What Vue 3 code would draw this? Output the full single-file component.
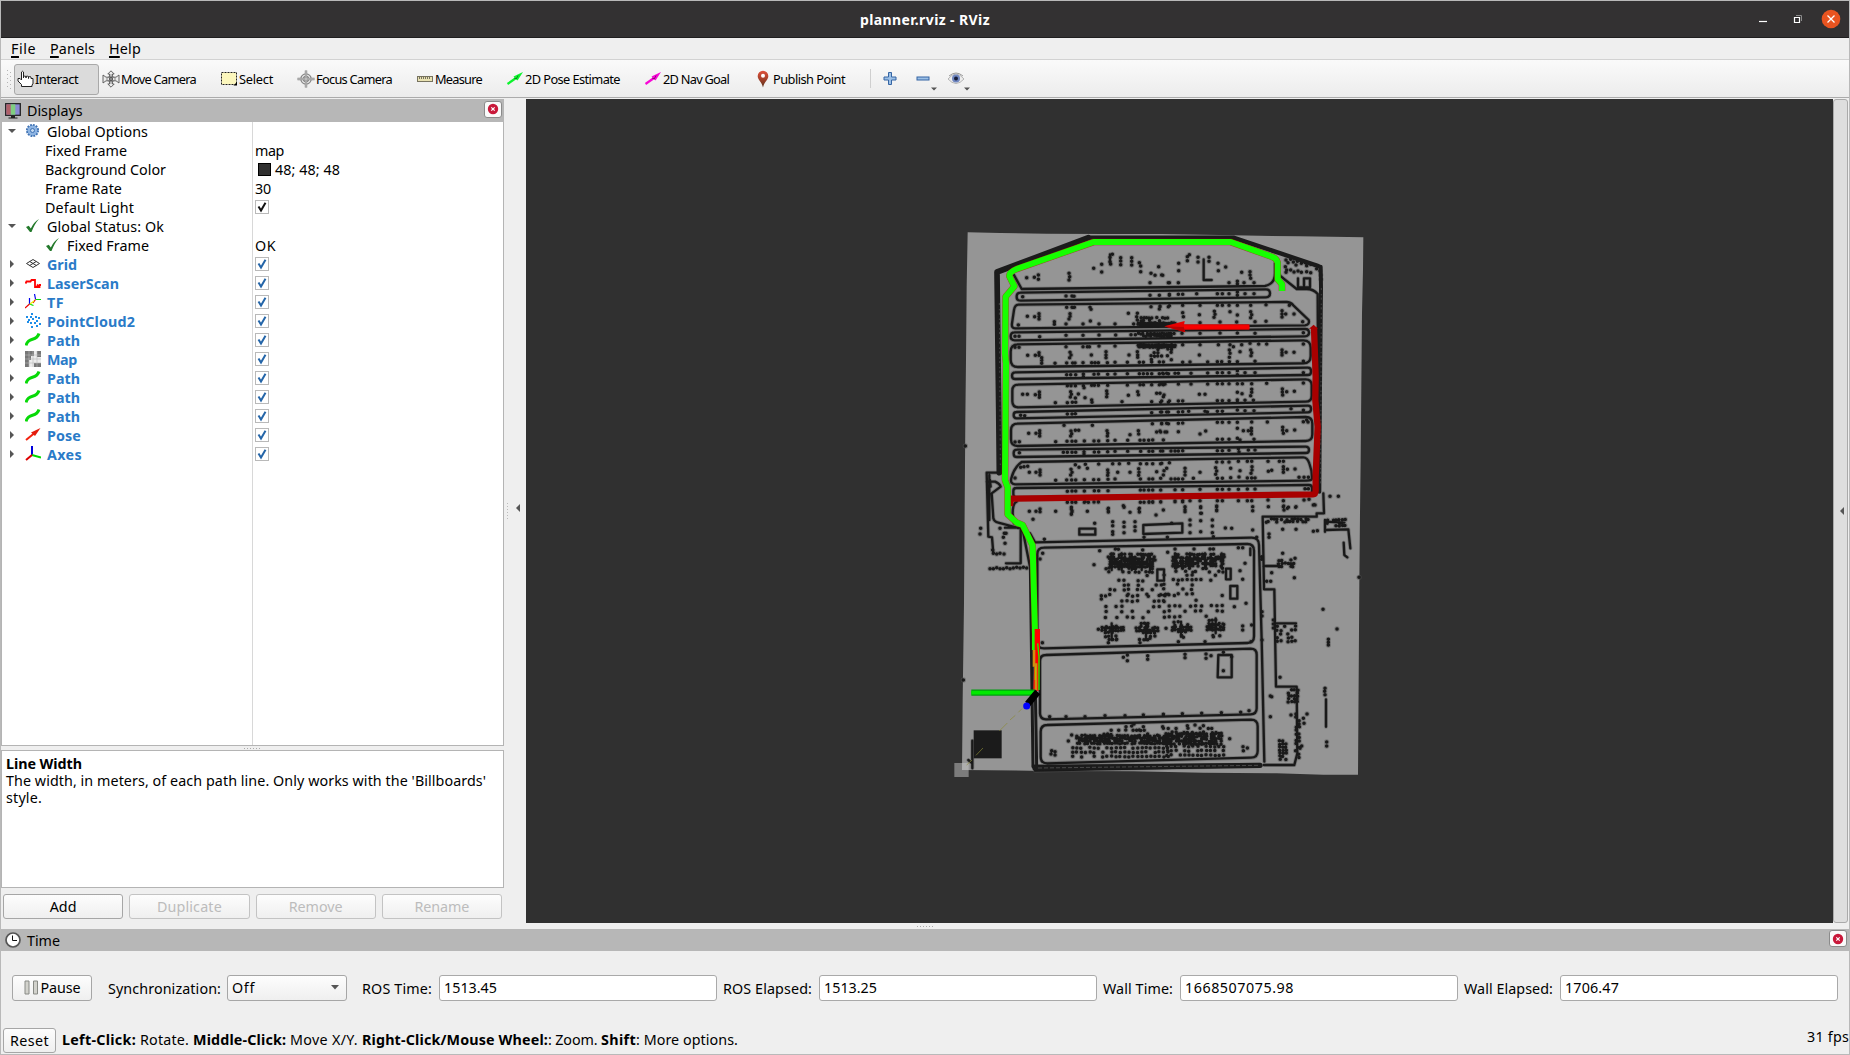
<script setup>
const vFit = {
  mounted(el, { value }) {
    const natural = el.getBoundingClientRect().width
    const count = el.textContent.length
    el.style.letterSpacing = `${(value - natural) / count}px`
  },
}

const menus = [
  { first: 'F', rest: 'ile', w: 25, gap: 14 },
  { first: 'P', rest: 'anels', w: 45, gap: 14 },
  { first: 'H', rest: 'elp', w: 32, gap: 0 },
]

const tools = [
  { icon: 'hand', text: 'Interact', w: 43, box: 85, active: true },
  { icon: 'move', text: 'Move Camera', w: 75, box: 118 },
  { icon: 'select', text: 'Select', w: 34, box: 77 },
  { icon: 'focus', text: 'Focus Camera', w: 76, box: 119 },
  { icon: 'measure', text: 'Measure', w: 47, box: 90 },
  { icon: 'pose', text: '2D Pose Estimate', w: 95, box: 138 },
  { icon: 'goal', text: '2D Nav Goal', w: 66, box: 110 },
  { icon: 'pin', text: 'Publish Point', w: 72, box: 110 },
]

const rows = [
  { open: true, icon: 'gear', text: 'Global Options', w: 101 },
  { leaf: true, text: 'Fixed Frame', w: 82, value: 'map', vw: 29 },
  { leaf: true, text: 'Background Color', w: 121, value: '48; 48; 48', vw: 65, swatch: true },
  { leaf: true, text: 'Frame Rate', w: 77, value: '30', vw: 16 },
  { leaf: true, text: 'Default Light', w: 89, check: 'dark' },
  { open: true, icon: 'ok', text: 'Global Status: Ok', w: 117 },
  { child: true, icon: 'ok', text: 'Fixed Frame', w: 82, value: 'OK', vw: 21 },
  { icon: 'grid', text: 'Grid', w: 30, display: true, check: 'blue' },
  { icon: 'laser', text: 'LaserScan', w: 72, display: true, check: 'blue' },
  { icon: 'tf', text: 'TF', w: 17, display: true, check: 'blue' },
  { icon: 'cloud', text: 'PointCloud2', w: 88, display: true, check: 'blue' },
  { icon: 'path', text: 'Path', w: 33, display: true, check: 'blue' },
  { icon: 'map', text: 'Map', w: 30, display: true, check: 'blue' },
  { icon: 'path', text: 'Path', w: 33, display: true, check: 'blue' },
  { icon: 'path', text: 'Path', w: 33, display: true, check: 'blue' },
  { icon: 'path', text: 'Path', w: 33, display: true, check: 'blue' },
  { icon: 'posearrow', text: 'Pose', w: 34, display: true, check: 'blue' },
  { icon: 'axes', text: 'Axes', w: 35, display: true, check: 'blue' },
]

const actions = [
  { text: 'Add', w: 27, on: true },
  { text: 'Duplicate', w: 65 },
  { text: 'Remove', w: 54 },
  { text: 'Rename', w: 55 },
]

const clocks = [
  { label: 'ROS Time:', w: 70, value: '1513.45', vw: 53 },
  { label: 'ROS Elapsed:', w: 89, value: '1513.25', vw: 53 },
  { label: 'Wall Time:', w: 70, value: '1668507075.98', vw: 109 },
  { label: 'Wall Elapsed:', w: 89, value: '1706.47', vw: 54 },
]

// Obstacle points of the occupancy map, one list per map quadrant.
const quadrants = [
  {
    dx: 0, dy: 0,
    pts: `230,173 253,172 265,165 265,178 357,160 359,170 357,180 431,145 455,133 455,156 480,112 487,103 480,125 482,132 512,113 512,123 512,134 545,113 545,124 545,135 568,128 572,138 572,155 603,160 615,166 626,140 638,166 600,188 655,188
218,230 348,228 366,228 372,229 600,226 628,226 658,226
205,315 232,289 254,290 267,281 267,289 267,297 313,305 313,313 350,262 366,262 373,262 360,281 360,289 357,297 348,312 399,312 420,262 423,268 421,303 447,312 495,312 535,280 562,280 560,290 562,300 551,312 603,260 630,260 628,267 655,260
195,349 207,349 269,350 348,346 399,346 447,345 497,345 543,344 556,344
195,382 207,382 233,406 256,406 267,398 267,406 275,413 275,421 275,430 348,380 399,380 412,380 418,380 447,378 495,378 360,397 363,405 359,413 424,405 468,395 468,405 468,413 537,405 562,395 563,405 563,412 315,430 350,429 368,429 375,429 399,428 425,428 435,428 445,428 472,428 495,427 532,427 568,427 580,427 605,426 628,426 640,426
350,464 362,464 377,464 400,462 400,470 432,463 445,462 473,463 495,462 532,461 568,461 580,461 592,461 605,461 628,461 640,461 655,461
218,523 232,523 256,524 268,516 268,524 268,532 352,497 363,497 376,497 400,497 402,503 425,496 433,496 445,496 473,496 532,495 570,494 580,494 605,494 628,494 640,494 362,515 364,523 361,531 376,534 385,522 405,533 470,513 471,521 470,530 535,526 563,515 565,524 316,548 352,548 367,547 377,547 425,540 426,547 516,545 605,545 620,520 640,530 632,547 655,547
212,586 224,587 352,582 366,582 376,581 605,578 632,576 655,576
236,640 258,640 269,632 269,640 269,648 195,666 208,665 342,616 427,616 607,611 635,611 655,611 363,633 365,641 362,648 376,631 386,631 471,632 473,640 472,648 540,644 565,632 566,642 317,665 351,664 366,664 377,664 403,663 432,663 446,663 473,662 495,661 533,661 570,661 582,661 596,661 608,660 620,636 632,636 645,636
208,698 340,697 352,697 366,697 377,697 402,695 402,702 433,696 446,696 473,695 495,694 533,694 572,694 597,694 608,694 632,693
195,774 212,742 222,740 233,739 238,757 258,757 270,750 270,757 270,765 376,734 406,733 446,732 488,731 508,731 536,730 571,731 590,731 608,731 632,731 363,748 366,757 362,765 387,742 412,745 473,750 474,758 473,766 503,757 540,757 566,746 567,757 566,766 317,781 350,780 365,780 377,780 403,779 431,779 446,779 474,778 495,777 571,777 597,777 608,777 632,775 620,755 640,765
352,814 366,813 377,813 403,813 433,812 446,812 474,812 571,810 582,810 596,810 608,810 632,810
238,874 258,874 270,867 270,875 317,874 352,847 366,847 377,847 403,847 415,847 432,846 445,846 364,867 366,875 364,883 412,874 474,867 475,876 520,857 522,862 540,877 567,867 568,876 571,847 582,847 597,847 608,847 632,846 46,678`,
  },
  {
    dx: 630, dy: 0,
    pts: `56,130 56,152 82,110 88,104 82,122 114,112 114,126 147,112 147,124 174,130 175,152 197,141 5,165 55,188 28,188 245,157 270,155 270,165 272,175 232,184 232,192 207,188 252,188 282,188
28,223 55,223 68,223 110,221 172,221 187,221 207,221 232,216 232,226 255,221 282,221
0,258 28,257 68,256 120,256 172,256 187,256 207,256 232,256 272,256 318,254 388,256 68,278 70,290 118,284 163,274 165,283 162,292 210,275 232,285 272,275 275,284 272,293 366,272 366,282 366,291 377,282 402,282 428,305 318,304 285,305 230,306 180,306 120,308
66,340 120,340 180,339 232,339 285,340 430,338
68,374 120,374 175,374 210,374 220,380 245,374 270,370 296,372 320,372 430,372 118,405 208,390 210,400 208,412 240,395 272,390 275,398 273,407 366,390 366,398 366,405 378,397 402,397 430,424 68,427 90,426 143,426 172,425 185,425 208,425 232,425 285,424
8,460 20,460 45,460 55,460 93,460 143,459 172,458 187,458 207,458 232,452 232,464 255,458 285,458 430,458
5,492 15,492 55,492 93,492 143,492 172,491 187,491 207,491 232,491 247,491 275,491 320,490 430,489 0,520 12,525 118,523 135,523 232,517 246,521 275,508 275,517 272,527 367,507 367,516 368,525 380,515 403,514 5,543 28,543 55,543 68,543 172,542 187,542 207,542 232,540 232,547 255,541 280,541
5,576 20,576 55,576 68,575 86,574 135,574 142,576 172,574 187,574 232,570 255,572 282,572 393,566 430,571
5,610 20,610 55,610 68,609 172,607 187,607 207,607 232,607 275,606 322,606 430,605 440,600 444,606 0,633 20,636 55,635 120,642 137,633 232,625 250,632 265,632 274,625 274,633 274,642 368,622 368,631 370,640 380,632 404,630 10,660 172,658 187,658 207,658 232,655 240,660 282,658
8,693 33,693 45,693 55,693 68,692 172,692 187,692 207,691 235,686 237,696 265,690 285,690
5,730 28,728 170,726 187,726 207,726 235,724 262,724 275,724 324,724 358,724 370,724 12,752 20,745 75,745 75,755 75,765 120,757 167,743 170,753 167,763 212,745 240,752 276,740 276,750 273,760 325,754 335,751 370,740 370,748 370,757 382,748 405,747 417,772 432,772 445,772 33,777 45,777 55,777 68,777 100,775 172,775 187,775 212,773 237,771 262,774 275,774 285,774
45,809 68,809 120,808 172,808 187,808 207,808 235,808 262,807 285,807 435,806 445,806
45,843 68,842 90,842 120,842 172,842 187,842 235,842 262,842 275,842 324,840 370,842 432,840 447,838 75,862 75,870 122,863 124,880 170,858 170,870 278,860 278,872 370,860 372,870 385,862 407,862 460,855 465,855 510,829 535,829
378,120 384,128 392,118 400,126 412,124 408,135 424,130 436,128 440,137 452,133 466,136 470,146 480,152 376,140 380,150 378,157 392,150 402,156 414,153 424,157 440,155 452,158 482,165 483,178`,
  },
  {
    dx: 0, dy: 840,
    pts: `238,34 258,34 270,27 270,35 249,58 317,34 283,118 364,22 366,32 364,41 405,5 445,5 475,25 475,34 488,65 488,77 488,95 488,103 522,20 522,67 522,80 522,98 555,65 555,80 555,92 568,25 568,35 434,70 597,5 608,5 618,45 632,5 640,30 582,112
92,85 90,102 150,85 163,100 160,112 168,100 128,150 130,160 150,160 162,162 165,130 120,206 130,206 140,203 150,206 160,206 170,203 180,206 190,204 200,202 210,204 220,202 230,204 140,162
270,177 278,160 277,428 432,194 496,147 449,152 505,148 578,150 615,180 475,428 500,418 570,428 600,415 454,287 454,297 445,388
520,472 532,465 532,482 593,467 593,478 299,650 348,650 405,650 465,647 525,647 580,645 640,645
305,752 315,765 315,755 303,762 355,723 365,705 528,680 545,678 580,680 552,672 568,690 40,540`,
  },
  {
    dx: 630, dy: 840,
    pts: `45,5 68,5 75,20 75,35 90,60 90,75 90,98 122,20 122,40 122,62 122,95 157,60 157,78 157,98 170,20 170,32 160,110 196,84 215,85 278,20 278,32 278,90 290,112 325,20 371,18 372,30 382,25 408,20 463,14 22,112 35,70
235,143 248,143 255,190 240,212 248,238 258,310 223,320 248,378 248,390 275,375 273,425 45,147 102,147 150,147 160,147 23,157 18,385 55,425 135,425 70,412 160,410 306,335 306,348 306,420
75,463 75,473 138,462 138,475 153,467 190,457 190,512 10,643 67,641 125,640 184,638 242,637 267,632 215,470
8,680 82,677 105,675 130,677 209,716 249,740 250,752 262,744
327,102 327,112 368,88 408,88 460,94 472,92 403,233 489,328 531,387 505,418 505,427 505,435 597,232 495,565 494,574 495,584 500,726 500,738 331,588 331,650 393,645 441,642 430,655 432,670 425,738 335,218 320,244 332,244 368,160 405,175 398,200 360,532 335,590 305,170 305,178 340,360 340,372 340,384 420,745`,
  },
]

// Storage areas: x, y, width, height, step, fill ratio.
const areas = [
  [572, 292, 95, 12, 8, 0.6], [564, 308, 110, 6, 5, 1], [564, 339, 110, 12, 7, 0.85], [564, 374, 110, 8, 5, 1], [602, 386, 60, 32, 10, 0.5],
  [474, 1002, 138, 14, 8, 0.65], [478, 1016, 134, 28, 7.5, 0.86], [466, 1044, 146, 10, 10, 0.6],
  [478, 1066, 180, 60, 14, 0.45], [450, 1126, 205, 74, 16, 0.4],
  [455, 1222, 64, 14, 8, 0.9], [468, 1208, 40, 12, 10, 0.6], [464, 1236, 40, 24, 11, 0.6],
  [558, 1222, 64, 14, 8, 0.9], [572, 1208, 36, 12, 10, 0.6], [568, 1236, 46, 24, 11, 0.6],
  [668, 1002, 152, 12, 8, 0.65], [668, 1014, 152, 28, 7.5, 0.86], [676, 1044, 140, 10, 10, 0.5],
  [640, 1064, 180, 60, 14, 0.4], [640, 1124, 190, 70, 16, 0.4],
  [666, 1220, 60, 14, 8, 0.9], [672, 1204, 40, 14, 10, 0.6], [672, 1234, 40, 20, 11, 0.6],
  [770, 1212, 56, 20, 8, 0.85], [776, 1200, 40, 12, 10, 0.6], [776, 1234, 40, 20, 11, 0.6],
  [380, 1546, 270, 28, 7.5, 0.85], [460, 1530, 160, 16, 11, 0.5], [366, 1582, 290, 30, 13, 0.85],
  [640, 1540, 175, 30, 7.5, 0.83], [640, 1524, 160, 14, 12, 0.5], [650, 1578, 180, 30, 13, 0.8],
  [946, 896, 130, 14, 8, 0.8], [985, 1020, 50, 20, 9, 0.6], [980, 1218, 56, 52, 11, 0.62],
  [1014, 1408, 34, 40, 9, 0.7], [988, 1562, 24, 58, 9, 0.85], [1036, 1480, 10, 130, 10, 0.6], [1130, 898, 54, 22, 9, 0.6],
]

function scatter() {
  let seed = 11
  const next = () => {
    seed = (seed * 16807) % 2147483647
    return seed / 2147483647
  }
  let d = ''
  for (const [x, y, w, h, step, ratio] of areas) {
    for (let j = 0; j <= h; j += step) {
      for (let i = 0; i <= w; i += step) {
        if (next() < ratio) d += `M${(x + i + next() * 3).toFixed(1)} ${(y + j + next() * 3).toFixed(1)}h.1`
      }
    }
  }
  return d
}

const dots =
  quadrants
    .map(q => q.pts.trim().split(/\s+/).map(p => {
      const [x, y] = p.split(',').map(Number)
      return `M${x + q.dx} ${y + q.dy}h.1`
    }).join(''))
    .join('') + scatter()

// Shelf rows: left x, left top, left bottom, right x, right top, right bottom, corner.
const shelves = [
  [200, 218, 242, 960, 208, 232, 12], [182, 337, 361, 1077, 327, 349, 12], [182, 373, 441, 1082, 361, 430, 22],
  [186, 457, 477, 1083, 443, 465, 10], [187, 494, 562, 1085, 478, 545, 18], [191, 576, 595, 1083, 557, 577, 9],
  [183, 611, 678, 1087, 591, 663, 20], [191, 689, 711, 1077, 680, 699, 10], [190, 804, 832, 1086, 795, 824, 9],
  [262, 983, 1285, 912, 972, 1269, 20], [270, 1305, 1498, 920, 1286, 1483, 18], [272, 1515, 1630, 923, 1499, 1613, 20],
]
const shelfPath = shelves.map(([lx, lt, lb, rx, rt, rb, r]) =>
  `M${lx + r} ${lt}L${rx - r} ${rt}Q${rx} ${rt} ${rx} ${rt + r}L${rx} ${rb - r}Q${rx} ${rb} ${rx - r} ${rb}L${lx + r} ${lb}Q${lx} ${lb} ${lx} ${lb - r}L${lx} ${lt + r}Q${lx} ${lt} ${lx + r} ${lt}`).join('')

const walls = shelfPath + [
  'M192 165L215 207L945 198Q975 192 975 160V130',
  'M205 254L1010 246Q1022 246 1030 256L1076 300Q1080 314 1065 316L195 325Q184 325 186 310L192 270Q195 254 205 254',
  'M215 726L1060 712Q1072 712 1078 730Q1086 750 1086 775Q1086 782 1070 782L195 793Q180 792 184 775Q192 742 215 726',
  'M200 845Q188 850 188 880L192 910M240 940L255 967L905 953Q927 953 927 975L935 1260L943 1625',
  'M980 150Q985 165 1000 175L1040 207H1070Q1090 207 1103 222L1106 790Q1105 815 1090 822',
  'M110 758H150M110 758L115 950L126 952L130 1000M110 785H135Q150 792 152 800L125 820L130 895Q132 905 145 908L205 924M120 780L122 800M118 765L118 900',
  'M165 923H212V1030H168M218 930L240 1040',
  'M67 1562V1645M55 1620L67 1630',
  'M250 1638L930 1634M255 1652L930 1638',
  'M1120 820L1122 880L1100 880V890H938L942 1108H973L978 1400H1040L1042 1600L1033 1635H942',
  'M940 1038H990M978 1210H1038M1125 900V935M1125 905L1183 908M1125 930L1195 928L1201 985M1181 968L1183 1005L1192 1012M1128 1438V1520M901 985V1005',
  'M761 118L761 180H785M480 103V132M388 926H436V944H388ZM580 915L697 910V938L580 942ZM622 1048H642V1082H622ZM828 1046H842V1078H828ZM841 1098H862V1136H841ZM805 1305H845V1372H803Z',
  'M1044 175V200M1044 202H1062M1062 175H1080V202H1062ZM485 1000V1050M515 1000V1050M545 1002V1050M575 1002V1050M600 1002V1050M675 1000V1045M720 1000V1045M765 1000V1045M815 1000V1045M485 1210V1260M588 1210V1260M693 1205V1250M797 1195V1240',
].join('')
</script>

<template>
  <div class="window">
    <header class="title">
      <div class="title-side"></div>
      <b v-fit="130">planner.rviz - RViz</b>
      <div class="title-side controls">
        <svg width="100" height="36" viewBox="0 0 100 36">
          <path d="M9 20.500h8" stroke="#fff" stroke-width="1.200" />
          <path d="M44.500 16.500h5v5h-5z" fill="none" stroke="#fff" stroke-width="1.200" />
          <path d="M46 14.500h5.500v5.500" fill="none" stroke="#8a8a8a" />
          <circle cx="81" cy="18" r="9.300" fill="#e95420" />
          <path d="M77.500 14.500l7 7m0-7l-7 7" stroke="#fff" stroke-width="1.300" />
        </svg>
      </div>
    </header>

    <nav class="menu">
      <span v-for="m in menus" :key="m.first" v-fit="m.w" :style="{ marginRight: m.gap + 'px' }"><u>{{ m.first }}</u>{{ m.rest }}</span>
    </nav>

    <div class="toolbar">
      <svg class="grip" width="6" height="20"><path d="M1.500 1v18M4.500 3v18" stroke="#b5b5b5" stroke-dasharray="1 3" /></svg>
      <div v-for="t in tools" :key="t.text" class="tool" :class="{ active: t.active }" :style="{ width: t.box + 'px' }">
        <svg width="18" height="18" viewBox="0 0 18 18">
          <path v-if="t.icon === 'hand'" d="M4.500 16.500V14.500L1 11V8.500h2l1.500 1.500V2q1-1.500 2 0V8V6.500q1.200-.8 2.500 0V8V6.500q1.200-.8 2.500 0V8.500V7q1.500-.8 2.500 0V8.500h2V14l-1 .8v1.700z" fill="#fff" stroke="#222" />
          <g v-else-if="t.icon === 'move'" fill="#ececec" stroke="#555" stroke-width=".9">
            <path d="M9 .8l3.200 3.200H10.500V7h-3V4H5.800zM9 17.200l3.200-3.200H10.500V11h-3v3H5.800z" />
            <path d="M1 5l3 2.200h10L17 5v8l-3-2.200H4L1 13z" />
            <path d="M9 4.500l4.500 4.500L9 13.500 4.500 9z" fill="none" stroke="#777" />
            <circle cx="9" cy="9" r="1.700" fill="#888" />
          </g>
          <g v-else-if="t.icon === 'select'"><rect x="1.500" y="2.500" width="15" height="12" fill="#fcf7bd" stroke="#222" stroke-dasharray="2 1" /><path d="M17 12v3.500h-3.500z" fill="#000" /></g>
          <g v-else-if="t.icon === 'focus'" fill="none" stroke="#858585" stroke-width="1.200">
            <circle cx="9" cy="9" r="5.200" /><circle cx="9" cy="9" r="2.600" /><path d="M9 .5v17M.5 9h17" stroke-width="2.400" /><path d="M9 1v16M1 9h16" stroke="#ddd" stroke-width=".8" />
          </g>
          <g v-else-if="t.icon === 'measure'"><rect x="1.500" y="6.500" width="15" height="5" fill="#e9e2b2" stroke="#77735f" /><path d="M3.500 7v2m2-2v2m2-2v2m2-2v2m2-2v2m2-2v2" stroke="#77735f" /></g>
          <g v-else-if="t.icon === 'pose' || t.icon === 'goal'" :class="t.icon">
            <path d="M1.500 14L10 8" stroke="currentColor" stroke-width="2.200" /><path d="M17 2L7.500 6.500l4 4z" fill="currentColor" /><path d="M8 8l3 1M12 5.500l-1.500 3" stroke="#0006" />
          </g>
          <g v-else><path d="M9 17.500C8 12 3.500 9.500 3.700 6a5.300 5.300 0 0 1 10.600 0C14.500 9.500 10 12 9 17.500z" fill="url(#pinfill)" /><circle cx="9" cy="5.700" r="2" fill="#fff" /></g>
          <defs><linearGradient id="pinfill" x2="0" y2="1"><stop stop-color="#e0523c" /><stop offset=".5" stop-color="#a5402a" /><stop offset="1" stop-color="#553018" /></linearGradient></defs>
        </svg>
        <span v-fit="t.w">{{ t.text }}</span>
      </div>
      <svg class="extras" width="104" height="32" viewBox="0 0 104 32">
        <path d="M.5 6v19" stroke="#cfcfcf" />
        <path d="M18.500 9.500h3v4.500h4.500v3h-4.500v4.500h-3v-4.500H14v-3h4.500z" fill="#9cc0e6" stroke="#3465a4" />
        <rect x="47" y="14" width="12" height="3" fill="#9cc0e6" stroke="#3465a4" />
        <path d="M61 24.500h6l-3 3zM94 24.500h6l-3 3z" fill="#555" />
        <path d="M78 16q8-10 16 0q-8 9-16 0z" fill="#ededed" stroke="#b5b5b5" />
        <circle cx="86" cy="15.500" r="4" fill="#6f86c0" /><circle cx="86" cy="15.500" r="2" fill="#151c38" /><path d="M79 13q7-6 14 0" fill="none" stroke="#999" />
      </svg>
    </div>

    <div class="middle">
      <aside class="left">
        <div class="dock">
          <svg width="18" height="18" viewBox="0 0 18 18"><rect x="1.700" y="1.700" width="14.600" height="11.600" fill="#8a8ad5" stroke="#222" stroke-width="1.300" /><path d="M2.300 2.300h4.500v10.400H2.300z" fill="#b06068" /><path d="M6.800 2.300h4.500v10.400H6.800z" fill="#80ce80" /><path d="M7 14h4v1.500h2.500v1h-9v-1H7z" fill="#222" /></svg>
          <span v-fit="55.500">Displays</span>
          <i class="close"><svg width="12" height="12" viewBox="0 0 12 12"><circle cx="6" cy="6" r="5.200" fill="#c9183a" /><path d="M4.300 4.300l3.400 3.400m0-3.400l-3.400 3.400" stroke="#fff" stroke-width="1.200" /></svg></i>
        </div>
        <div class="tree">
          <div v-for="(r, i) in rows" :key="i" class="row" :class="{ leaf: r.leaf, child: r.child, display: r.display }">
            <div class="name">
              <svg v-if="!r.leaf && !r.child" class="expander" width="10" height="10"><path :d="r.open ? 'M1 3h8L5 7z' : 'M3 1v8l4-4z'" fill="#555" /></svg>
              <svg v-if="r.icon" class="icon" width="16" height="16" viewBox="0 0 16 16">
                <g v-if="r.icon === 'gear'"><circle cx="7.500" cy="7.500" r="5.400" fill="#87b0df" stroke="#3f72b4" stroke-width="2.300" stroke-dasharray="1.800 1" /><circle cx="7.500" cy="7.500" r="4.800" fill="#8db4e2" /><circle cx="7.500" cy="7.500" r="2" fill="#c4d9f0" stroke="#3f72b4" /></g>
                <path v-else-if="r.icon === 'ok'" d="M1 9l2.800-1.200 2 2.700q3-6.500 8.200-9.500q-4.500 5-7.500 13H5z" fill="#23792b" />
                <g v-else-if="r.icon === 'grid'" fill="none" stroke="#333"><path d="M1.500 7.500L8 3.500l6.500 4L8 11.500zM4.800 5.500l6.500 4M11.200 5.500l-6.500 4" /></g>
                <path v-else-if="r.icon === 'laser'" d="M.5 8.500l1-2h4l1-1.500h3.500v7h2l.5-1.500L14 12h.5V10H16" fill="none" stroke="#f00" stroke-width="1.800" />
                <g v-else-if="r.icon === 'tf'" fill="none" stroke-width="1.200"><path d="M4.500 4v6M9.500 0l1 5" stroke="#00e" /><path d="M4.500 10l4 1.500M10.500 5.500H16" stroke="#0d0" /><path d="M4.500 10L0 14M10.500 5.500L8 9" stroke="#e00" /><path d="M5 10l4-3" stroke="#ee0" /></g>
                <path v-else-if="r.icon === 'cloud'" d="M6 1h2M1 4h2m2 0h2m3 0h2m1 1h2M3 7h2m2-1h2m2 2h2M5 10h2m-5-1h2m5 1h2m3 1h2M6 14h2m3-1h2" stroke="#1d8de8" stroke-width="2" />
                <path v-else-if="r.icon === 'path'" d="M1 13.500C3 4.500 11.500 10 14 1.500" fill="none" stroke="#08d908" stroke-width="3" />
                <g v-else-if="r.icon === 'map'"><path d="M0 0h16v16H0z" fill="#ededed" /><path d="M0 0h9v5H6v4H4v7H0zM12 0h4v6h-4zM9 12h7v4H9z" fill="#777" /><path d="M0 4h16M0 8h16M0 12h16M4 0v16M8 0v16M12 0v16" stroke="#bbb" stroke-width=".6" /></g>
                <g v-else-if="r.icon === 'posearrow'"><path d="M1 13L9 6.500" stroke="#f2220f" stroke-width="2" /><path d="M15.500 1L6 5.500l4 3.500z" fill="#e31b0c" /></g>
                <g v-else fill="none" stroke-width="2"><path d="M7 9V0" stroke="#00d" /><path d="M7 9l9 2.500" stroke="#0d0" /><path d="M7 9l-6 5" stroke="#d00" /></g>
              </svg>
              <span v-fit="r.w">{{ r.text }}</span>
            </div>
            <div class="value">
              <i v-if="r.swatch" class="swatch"></i>
              <span v-if="r.value" v-fit="r.vw">{{ r.value }}</span>
              <i v-if="r.check" class="check" :class="r.check"><svg width="12" height="12"><path d="M2.500 5.500L5 9.500L9.500 1.800" fill="none" stroke="currentColor" stroke-width="2" /></svg></i>
            </div>
          </div>
          <div class="row filler"><div class="name"></div></div>
        </div>
        <div class="split"><i></i></div>
        <div class="help">
          <b v-fit="76">Line Width</b>
          <span v-fit="480">The width, in meters, of each path line. Only works with the 'Billboards'</span>
          <span v-fit="36">style.</span>
        </div>
        <div class="actions">
          <button v-for="a in actions" :key="a.text" :disabled="!a.on"><span v-fit="a.w">{{ a.text }}</span></button>
        </div>
      </aside>
      <div class="handle"><svg width="18" height="18"><path d="M1.500 1v17" stroke="#bbb" stroke-dasharray="1 2" /><path d="M14 2v8l-4-4z" fill="#555" /></svg></div>

      <main class="view">
        <svg width="1307" height="824" viewBox="526 99 1307 824">
          <g transform="translate(950 220) scale(.333333)">
            <path d="M53 37L150 39L290 41L460 42L630 42L850 46L1050 49L1240 52L1239 150L1236 280L1234 500L1232 720L1230 880L1228 1090L1226 1380L1224 1664L1120 1664L980 1660L760 1658L550 1654L240 1652L36 1650L38 1440L42 1150L44 860L46 600L48 420L50 200Z" fill="#959595" />
            <g fill="none" stroke-linecap="round" stroke-linejoin="round">
              <g stroke="#555" opacity=".45"><path :d="walls" stroke-width="12" /><path :d="dots" stroke-width="16" /></g>
              <g stroke="#191919"><path :d="walls" stroke-width="7" /><path :d="dots" stroke-width="10.500" /></g>
              <path d="M148 758L146 560L141 156L415 53" stroke="#1b1b1b" stroke-width="17" />
              <path d="M415 53H850L1105 138" stroke="#1b1b1b" stroke-width="13" />
              <path d="M1112 140L1113 205L1110 500L1108 815" stroke="#1b1b1b" stroke-width="12" />
              <path d="M1114 205L1112 800M148 250L151 740" stroke="#6e6e6e" stroke-width="1.500" stroke-dasharray="4 14 2 9" />
              <path d="M241 1040L249 1640M254 1300L260 1640" stroke="#1b1b1b" stroke-width="9" />
              <path d="M255 1644L930 1636" stroke="#1b1b1b" stroke-width="16" /><path d="M265 1644L930 1636" stroke="#777" stroke-width="1.500" stroke-dasharray="10 8" />
            </g>
            <rect x="71" y="1531" width="84" height="84" fill="#1b1b1b" />
            <rect x="13" y="1629" width="43" height="42" fill="#c8c8c8" opacity=".5" />
            <path d="M50 1635L66 1620M78 1606L99 1584M148 1533L172 1509M180 1500L196 1486M205 1477L216 1466" stroke="#8a8a35" stroke-width="2" />
            <g fill="none" stroke-linejoin="round">
              <path d="M180 858L182 836L1088 823Q1097 822 1097 812L1097 770L1103 620L1096 540L1097 470L1092 322" stroke="#a80000" stroke-width="19" />
              <path d="M1077 326L1091 314L1104 326z" fill="#a80000" />
              <path d="M996 213V193L983 178V128Q980 115 965 110L842 66H431L200 147Q178 156 178 168L193 199L167 230L165 400L168 430L165 780L173 802V883L200 908L218 915L248 977L255 1240V1290" stroke="#b01000" stroke-width="20" opacity=".7" />
              <path d="M996 213V193L983 178V128Q980 115 965 110L842 66H431L200 147Q178 156 178 168L193 199L167 230L165 400L168 430L165 780L173 802V883L200 908L218 915L248 977L255 1240V1290" stroke="#16ff00" stroke-width="18" />
              <path d="M262 1227V1300L258 1412" stroke="#f00" stroke-width="16" />
              <path d="M263 1270L267 1310V1410" stroke="#20f000" stroke-width="4" />
              <path d="M252 1290V1340M258 1330V1410" stroke="#d09010" stroke-width="8" />
              <path d="M256 1340V1380" stroke="#b8bd00" stroke-width="4" />
            </g>
            <path d="M64 1418H256" stroke="#009d10" stroke-width="19" /><path d="M64 1418H258" stroke="#00e900" stroke-width="11" />
            <path d="M263 1416L233 1452" stroke="#000" stroke-width="20" /><circle cx="230" cy="1458" r="10.500" fill="#00f" />
            <path d="M700 321H898" stroke="#d80000" stroke-width="17" /><path d="M700 321H898" stroke="#f80000" stroke-width="10" />
            <path d="M643 319L704 303L701 321L706 337z" fill="#e60000" /><path d="M643 319L701 321L706 337z" fill="#b80000" />
          </g>
        </svg>
      </main>
      <div class="handle right"><svg width="6" height="8"><path d="M5 0v8L1 4z" fill="#555" /></svg></div>
    </div>

    <div class="split wide"><i></i></div>

    <div class="dock time">
      <svg width="18" height="18" viewBox="0 0 18 18"><circle cx="9" cy="9" r="7" fill="#fff" stroke="#555" stroke-width="1.700" /><path d="M8.500 4.500v5H13" fill="none" stroke="#111" /></svg>
      <span v-fit="33">Time</span>
      <i class="close"><svg width="12" height="12" viewBox="0 0 12 12"><circle cx="6" cy="6" r="5.200" fill="#c9183a" /><path d="M4.300 4.300l3.400 3.400m0-3.400l-3.400 3.400" stroke="#fff" stroke-width="1.200" /></svg></i>
    </div>

    <div class="clocks">
      <button class="pause"><svg width="15" height="15"><path d="M1 1h4v13H1zM9.500 1h4v13h-4z" fill="#d2d2cc" stroke="#888a85" /></svg><span v-fit="40">Pause</span></button>
      <label v-fit="113" class="sync">Synchronization:</label>
      <div class="combo"><span v-fit="23">Off</span><svg width="8" height="5"><path d="M0 0h8L4 4.500z" fill="#555" /></svg></div>
      <div v-for="c in clocks" :key="c.label" class="clock">
        <label v-fit="c.w">{{ c.label }}</label>
        <div class="field"><span v-fit="c.vw">{{ c.value }}</span></div>
      </div>
    </div>

    <footer class="status">
      <button class="reset"><span v-fit="39">Reset</span></button>
      <p><b v-fit="78">Left-Click: </b><span v-fit="53">Rotate. </span><b v-fit="97">Middle-Click: </b><span v-fit="72">Move X/Y. </span><b v-fit="186">Right-Click/Mouse Wheel:</b><span v-fit="53">: Zoom. </span><b v-fit="35">Shift</b><span v-fit="102">: More options.</span></p>
      <em v-fit="42">31 fps</em>
    </footer>
  </div>
</template>

<style>
body { background: #efefef; overflow: hidden; }
</style>

<style scoped>
* { box-sizing: border-box; }
.window { width: 1850px; height: 1055px; border: 1px solid #b9b9b9; background: #efefef; display: flex; flex-direction: column; font: 14.3px/17px "Noto Sans", "Open Sans", sans-serif; color: #000; }
span, b, label, em { display: inline-block; white-space: pre; }
.title { height: 37px; flex: none; background: #333132; border-bottom: 1px solid #1f1e1f; display: flex; align-items: center; color: #fff; font-size: 14px; }
.title-side { flex: 1; height: 36px; }
.title b { margin-top: 1px; }
.controls { display: flex; justify-content: flex-end; }
.controls svg { margin-right: -1px; }
.menu { height: 22px; flex: none; border-bottom: 1px solid #d2d2d2; padding-left: 10px; display: flex; align-items: center; }
.menu u { text-decoration-thickness: 1.500px; text-underline-offset: 2px; }
.toolbar { height: 38px; flex: none; background: linear-gradient(#fafafa, #ececec); border-bottom: 1px solid #ababab; display: flex; align-items: center; padding: 1px 0 0 5px; font-size: 12.800px; }
.grip { margin-right: 2px; }
.tool { height: 31px; display: flex; align-items: center; padding-left: 2px; border: 1px solid transparent; border-radius: 3px; }
.tool + .tool span { margin-left: 1px; }
.tool.active { background: #dbdbdb; border-color: #a9a9a9; }
.tool .pose { color: #0bf42c; }
.tool .goal { color: #f808d6; }
.extras { margin-left: 9px; }
.middle { height: 825px; flex: none; display: flex; padding-top: 1px; }
.left { width: 503px; display: flex; flex-direction: column; }
.dock { height: 23px; flex: none; background: #b7b7b7; display: flex; align-items: center; padding-left: 3px; font-size: 14.300px; }
.dock span { margin-left: 5px; }
.dock .close { margin: 0 2px 3px auto; }
.close { width: 18px; height: 17px; border: 1px solid #8b8b8b; border-radius: 3px; background: #fafafa; display: flex; align-items: center; justify-content: center; }
.tree { height: 624px; flex: none; background: #fff; border: 1px solid #b4b4b4; border-top: 0; display: flex; flex-direction: column; }
.row { height: 19px; flex: none; display: flex; }
.filler { flex: 1; height: auto; }
.name { width: 251px; border-right: 1px solid #d8d8d8; display: flex; align-items: center; padding: 0 0 1px 5px; }
.expander { margin-right: 8px; }
.icon { margin-right: 6px; }
.leaf .name { padding-left: 43px; }
.child .name { padding-left: 43px; }
.display span { color: #2a7bc8; font-weight: 700; }
.value { padding: 0 0 1px 2px; display: flex; align-items: center; }
.swatch { width: 13px; height: 13px; margin: 0 4px 0 3px; background: #303030; border: 1px solid #000; }
.check { width: 14px; height: 14px; border: 1px solid #b9b9b9; background: #fff; color: #111; display: flex; }
.check.blue { color: #2465a8; }
.split { height: 4px; flex: none; display: flex; justify-content: center; align-items: center; }
.split i { width: 17px; height: 1px; background: repeating-linear-gradient(90deg, #aaa 0 1px, transparent 1px 3px); }
.split.wide { height: 6px; }
.help { height: 138px; flex: none; background: #fff; border: 1px solid #b4b4b4; padding: 4px; display: flex; flex-direction: column; align-items: flex-start; }
.actions { display: flex; gap: 6px; padding: 6px 2px 0; }
button { font: inherit; color: #000; border: 1px solid #a6a6a6; border-radius: 3px; background: linear-gradient(#fdfdfd, #efefef); padding: 0; display: flex; align-items: center; justify-content: center; }
.actions button { flex: 1; height: 25px; }
button:disabled { color: #bcbcbc; border-color: #c3c3c3; }
.handle { width: 22px; display: flex; align-items: center; padding-left: 2px; }
.handle.right { width: 15px; background: #dedede; border: 1px solid #aaa; border-radius: 3px; padding-left: 5px; }
.view { width: 1307px; height: 824px; background: #303030; }
.view svg { display: block; }
.time { height: 22px; }
.time .close { margin-right: 2px; }
.clocks { height: 73px; flex: none; display: flex; align-items: center; padding: 0 11px; }
.pause { width: 80px; height: 26px; }
.pause svg { margin-right: 2px; }
.sync { margin-left: 16px; }
.clocks label { padding-top: 2px; }
.combo { width: 120px; height: 26px; margin-left: 6px; border: 1px solid #a6a6a6; border-radius: 3px; background: linear-gradient(#fdfdfd, #efefef); display: flex; align-items: center; justify-content: space-between; padding: 0 7px 0 4px; }
.clock { display: flex; align-items: center; margin-left: 6px; flex: none; }
.combo + .clock { margin-left: 15px; }
.field { width: 278px; height: 26px; margin-left: 7px; background: #fff; border: 1px solid #a9a9a9; border-radius: 3px; padding-left: 4px; display: flex; align-items: center; }
.status { flex: 1; display: flex; align-items: flex-end; padding: 0 0 1px 2px; }
.reset { width: 53px; height: 25px; }
.status p { margin: 0 0 5px 6px; display: flex; }
.status em { font-style: normal; margin: 0 0 8px auto; }
</style>
